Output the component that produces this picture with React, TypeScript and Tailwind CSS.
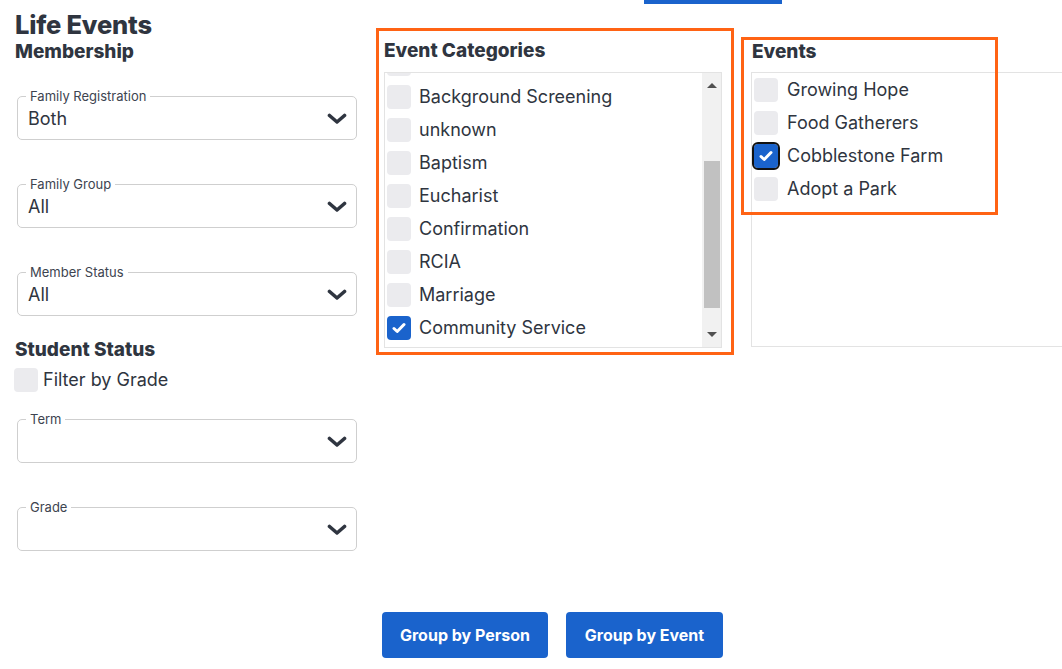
import React from "react";

const font = { fontFamily: "Inter, 'Noto Sans', sans-serif" };

function Chevron() {
  return (
    <svg width="20" height="12" viewBox="0 0 20 12" className="shrink-0">
      <path d="M2.5 2.5L10 9l7.5-6.5" fill="none" stroke="#2f3540" strokeWidth="3.6" strokeLinecap="round" strokeLinejoin="round" />
    </svg>
  );
}

function Check() {
  return (
    <svg width="14" height="12" viewBox="0 0 14 12">
      <path d="M2 6.5l3.2 3L12 2.5" fill="none" stroke="#fff" strokeWidth="3" strokeLinecap="round" strokeLinejoin="round" />
    </svg>
  );
}

function Box({ checked, focused }: { checked?: boolean; focused?: boolean }) {
  if (checked) {
    return (
      <div
        className={`w-6 h-6 shrink-0 rounded-[4px] bg-[#1a63cc] flex items-center justify-center ${
          focused ? "outline-2 outline-[#111] outline-offset-0" : ""
        }`}
      >
        <Check />
      </div>
    );
  }
  return <div className="w-6 h-6 shrink-0 rounded-[4px] bg-[#ebebee]" />;
}

function Select({ label, value }: { label: string; value?: string }) {
  return (
    <div className="relative w-[340px] h-[44px] border border-[#cfcfcf] rounded-[5px] ml-[2px] pl-[10px] pr-[9px] pt-[2px] flex items-center justify-between">
      <span className="absolute -top-[8px] left-[8px] bg-white px-[4px] text-[13px] text-[#3d4450] leading-[14px]">
        {label}
      </span>
      <span className="text-[18px] text-[#2f3540] leading-[22px]">{value}</span>
      <Chevron />
    </div>
  );
}

function Row({ label, checked, focused, gap = "gap-[8px]" }: { label: string; checked?: boolean; focused?: boolean; gap?: string }) {
  return (
    <div className={`h-[33px] flex items-center ${gap}`}>
      <Box checked={checked} focused={focused} />
      <span className="text-[18px] text-[#2f3540] whitespace-nowrap">{label}</span>
    </div>
  );
}

const categories = [
  "Hidden",
  "Background Screening",
  "unknown",
  "Baptism",
  "Eucharist",
  "Confirmation",
  "RCIA",
  "Marriage",
  "Community Service",
];

const events = ["Growing Hope", "Food Gatherers", "Cobblestone Farm", "Adopt a Park"];

export default function App() {
  return (
    <div className="relative w-[1062px] h-[669px] overflow-hidden bg-white text-[#2f3540]" style={font}>
      <div className="absolute left-[644px] top-0 w-[138px] h-[4px] bg-[#1a63cc]" />

      <div className="flex">
        {/* left column */}
        <div className="w-[376px] pl-[15px] pt-[9px] shrink-0">
          <h1 className="text-[25.5px] font-extrabold leading-[32px] tracking-[-0.2px]">Life Events</h1>
          <h2 className="text-[19px] font-extrabold leading-[22px]">Membership</h2>

          <div className="mt-[33px] flex flex-col gap-[44px]">
            <Select label="Family Registration" value="Both" />
            <Select label="Family Group" value="All" />
            <Select label="Member Status" value="All" />
          </div>

          <h2 className="text-[19px] font-extrabold leading-[22px] mt-[23px]">Student Status</h2>
          <div className="flex items-center gap-[5px] mt-[5px] -ml-[1px]">
            <Box />
            <span className="text-[18px]">Filter by Grade</span>
          </div>

          <div className="mt-[26px] flex flex-col gap-[44px]">
            <Select label="Term" />
            <Select label="Grade" />
          </div>
        </div>

        {/* event categories */}
        <div className="w-[358px] h-[327px] mt-[28px] border-[3px] border-[#ff6314] shrink-0 pl-[5px] pr-[9px] pt-[8px]">
          <h2 className="text-[19px] font-extrabold leading-[24px]">Event Categories</h2>
          <div className="mt-[9px] h-[276px] border border-[#e3e3e3] flex overflow-hidden">
            <div className="flex-1 overflow-hidden pl-[2px]">
              <div className="-mt-[26px]">
                {categories.map((c, i) => (
                  <Row key={c} label={i === 0 ? "" : c} checked={c === "Community Service"} />
                ))}
              </div>
            </div>
            <div className="w-[19px] bg-[#f1f1f1] flex flex-col items-center">
              <div className="h-[24px] flex items-center justify-center">
                <div className="w-0 h-0 border-x-[5px] border-x-transparent border-b-[5px] border-b-[#505050]" />
              </div>
              <div className="h-[64px]" />
              <div className="w-[16px] h-[147px] bg-[#c1c1c1]" />
              <div className="flex-1 flex items-end justify-center pb-[10px]">
                <div className="w-0 h-0 border-x-[5px] border-x-transparent border-t-[5px] border-t-[#505050]" />
              </div>
            </div>
          </div>
        </div>

        {/* events */}
        <div className="ml-[17px] pt-[40px] w-[340px] shrink-0">
          <h2 className="text-[19px] font-extrabold leading-[24px] ml-[1px]">Events</h2>
          <div className="mt-[8px] h-[275px] border border-[#e3e3e3] border-r-0 pl-[2px]">
            {events.map((e) => (
              <Row
                key={e}
                label={e}
                gap="gap-[9px]"
                checked={e === "Cobblestone Farm"}
                focused={e === "Cobblestone Farm"}
              />
            ))}
          </div>
        </div>
      </div>

      <div className="absolute left-[741px] top-[37px] w-[257px] h-[178px] border-[3px] border-[#ff6314] pointer-events-none" />

      <div className="flex gap-[18px] ml-[382px] mt-[61px]">
        <button className="w-[166px] h-[46px] rounded-[4px] bg-[#1a63cc] text-white text-[16px] font-bold">
          Group by Person
        </button>
        <button className="w-[157px] h-[46px] rounded-[4px] bg-[#1a63cc] text-white text-[16px] font-bold">
          Group by Event
        </button>
      </div>
    </div>
  );
}
